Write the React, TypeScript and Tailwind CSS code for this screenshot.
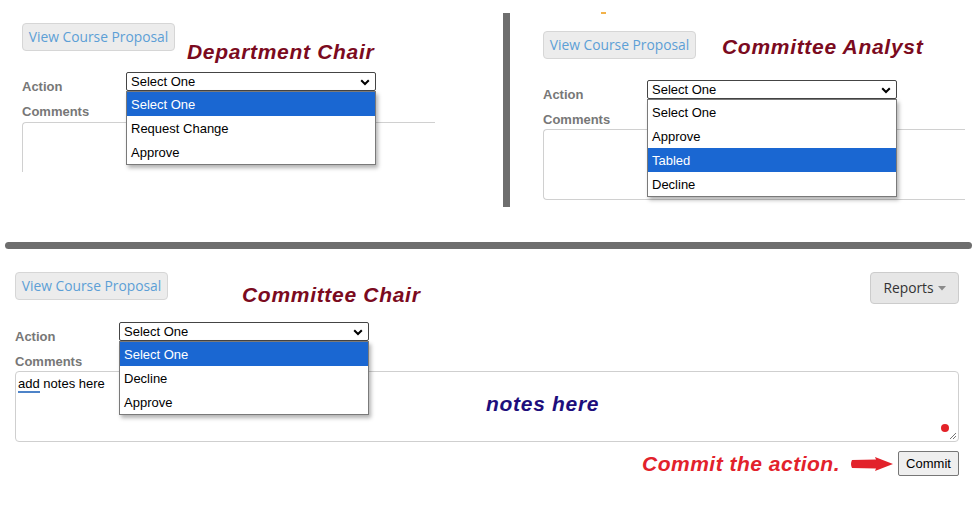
import React from "react";

type Opt = { label: string; active?: boolean };

function ViewButton() {
  return (
    <div className="flex h-[28px] w-[153px] items-center justify-center rounded-[4px] border border-[#d6d6d6] bg-[#ececec] font-['Open_Sans',sans-serif] text-[13.8px] text-[#5c9fd6]">
      View Course Proposal
    </div>
  );
}

function Chevron() {
  return (
    <svg width="10" height="7" viewBox="0 0 10 7" className="absolute right-[5px] top-[6px]">
      <path d="M1.2 1.2 L5 5 L8.8 1.2" fill="none" stroke="#000" strokeWidth="2" />
    </svg>
  );
}

function SelectWithMenu({ options }: { options: Opt[] }) {
  return (
    <div className="relative h-[19px] w-[250px] rounded-[2px] border border-[#444] bg-white">
      <div className="pl-[4px] text-[13px] leading-[17px] text-black">Select One</div>
      <Chevron />
      <div className="absolute left-[-1px] top-[18px] z-10 w-[250px] border border-[#7a7a7a] bg-white shadow-[2px_3px_4px_rgba(0,0,0,0.3)]">
        {options.map((o) => (
          <div
            key={o.label}
            className={
              o.active
                ? "flex h-[24px] items-center bg-[#1a67d2] pl-[4px] pt-[1px] text-[13px] text-white"
                : "flex h-[24px] items-center pl-[4px] pt-[1px] text-[13px] text-black"
            }
          >
            {o.label}
          </div>
        ))}
      </div>
    </div>
  );
}

function Label({ children }: { children: React.ReactNode }) {
  return <div className="text-[13px] font-bold leading-[15px] text-[#777]">{children}</div>;
}

function Note({ children, className }: { children: React.ReactNode; className: string }) {
  return (
    <div
      className={
        "absolute whitespace-nowrap font-['Liberation_Sans',Arial,sans-serif] text-[21px] font-bold italic leading-[21px] tracking-[0.7px] " +
        className
      }
    >
      {children}
    </div>
  );
}

export default function App() {
  return (
    <div className="relative h-[520px] w-[977px] overflow-hidden bg-white font-['Liberation_Sans',Arial,sans-serif]">
      <div className="absolute left-[601px] top-[12px] h-[2px] w-[5px] bg-[#f2b24a]" />
      {/* top section */}
      <div className="flex h-[242px]">
        {/* panel 1 */}
        <div className="relative w-[503px] pl-[22px] pt-[23px]">
          <ViewButton />
          <Note className="left-[187px] top-[41px] text-[#7b0a20]">Department Chair</Note>
          <div className="mt-[21px] flex items-start">
            <div className="mt-[7px] w-[104px]">
              <Label>Action</Label>
            </div>
            <SelectWithMenu
              options={[{ label: "Select One", active: true }, { label: "Request Change" }, { label: "Approve" }]}
            />
          </div>
          <div className="mt-[10px]">
            <Label>Comments</Label>
          </div>
          <div className="mt-[3px] h-[50px] w-[413px] rounded-tl-[4px] border-l border-t border-[#d0d0d0]" />
        </div>
        {/* vertical divider */}
        <div className="mt-[13px] h-[194px] w-[7px] bg-[#6e6e6e]" />
        {/* panel 2 */}
        <div className="relative flex-1 pl-[33px] pt-[31px]">
          <ViewButton />
          <Note className="left-[212px] top-[36px] text-[#7b0a20]">Committee Analyst</Note>
          <div className="mt-[21px] flex items-start">
            <div className="mt-[7px] w-[104px]">
              <Label>Action</Label>
            </div>
            <SelectWithMenu
              options={[
                { label: "Select One" },
                { label: "Approve" },
                { label: "Tabled", active: true },
                { label: "Decline" },
              ]}
            />
          </div>
          <div className="mt-[10px]">
            <Label>Comments</Label>
          </div>
          <div className="mt-[2px] h-[71px] w-[422px] rounded-l-[4px] border-b border-l border-t border-[#d0d0d0]" />
        </div>
      </div>
      {/* horizontal divider */}
      <div className="mx-[5px] h-[7px] rounded-full bg-[#6e6e6e]" />
      {/* bottom panel */}
      <div className="relative pl-[15px] pr-[18px] pt-[23px]">
        <Note className="left-[242px] top-[35px] text-[#7b0a20]">Committee Chair</Note>
        <div className="flex items-start justify-between">
          <ViewButton />
          <div className="flex h-[32px] w-[89px] items-center justify-center gap-[4px] rounded-[4px] border border-[#cccccc] bg-[#e6e6e6] font-['Open_Sans',sans-serif] text-[13.8px] text-[#333]">
            <span>Reports</span>
            <svg width="8" height="5" viewBox="0 0 8 5">
              <path d="M0 0 L8 0 L4 4.5 Z" fill="#8a8a8a" />
            </svg>
          </div>
        </div>
        <div className="mt-[18px] flex items-start">
          <div className="mt-[7px] w-[104px]">
            <Label>Action</Label>
          </div>
          <SelectWithMenu
            options={[{ label: "Select One", active: true }, { label: "Decline" }, { label: "Approve" }]}
          />
        </div>
        <div className="mt-[10px]">
          <Label>Comments</Label>
        </div>
        <div className="relative mt-[2px] h-[71px] w-[944px] rounded-[4px] border border-[#cfcfcf] pl-[2px] pt-[4px]">
          <div className="text-[13px] leading-[15px] text-black">
            <span className="relative">
              add
              <span className="absolute bottom-[-2px] left-0 h-[2px] w-full bg-[#4d83c8]" />
            </span>{" "}
            notes here
          </div>
          <Note className="left-[470px] top-[21px] text-[#1d0e7c]">notes here</Note>
          <div className="absolute bottom-[9px] right-[9px] h-[8px] w-[8px] rounded-full bg-[#e32228]" />
          <svg width="8" height="8" viewBox="0 0 8 8" className="absolute bottom-[1px] right-[1px]">
            <path d="M7 1 L1 7 M7 4 L4 7" stroke="#777" strokeWidth="1" />
          </svg>
        </div>
        <div className="mt-[9px] flex items-center justify-end">
          <div className="whitespace-nowrap text-[21px] font-bold italic leading-[21px] tracking-[0.5px] text-[#e2222b]">
            Commit the action.
          </div>
          <svg width="43" height="14" viewBox="0 0 43 14" className="ml-[10px]">
            <path d="M2 3 L26 2.5 L25 0 L43 7 L25 14 L26 11.5 L2 11 Q0 7 2 3 Z" fill="#e2222b" />
          </svg>
          <div className="ml-[5px] flex h-[25px] w-[61px] items-center justify-center rounded-[2px] border border-[#767676] bg-[#efefef] text-[13px] text-black">
            Commit
          </div>
        </div>
      </div>
    </div>
  );
}
